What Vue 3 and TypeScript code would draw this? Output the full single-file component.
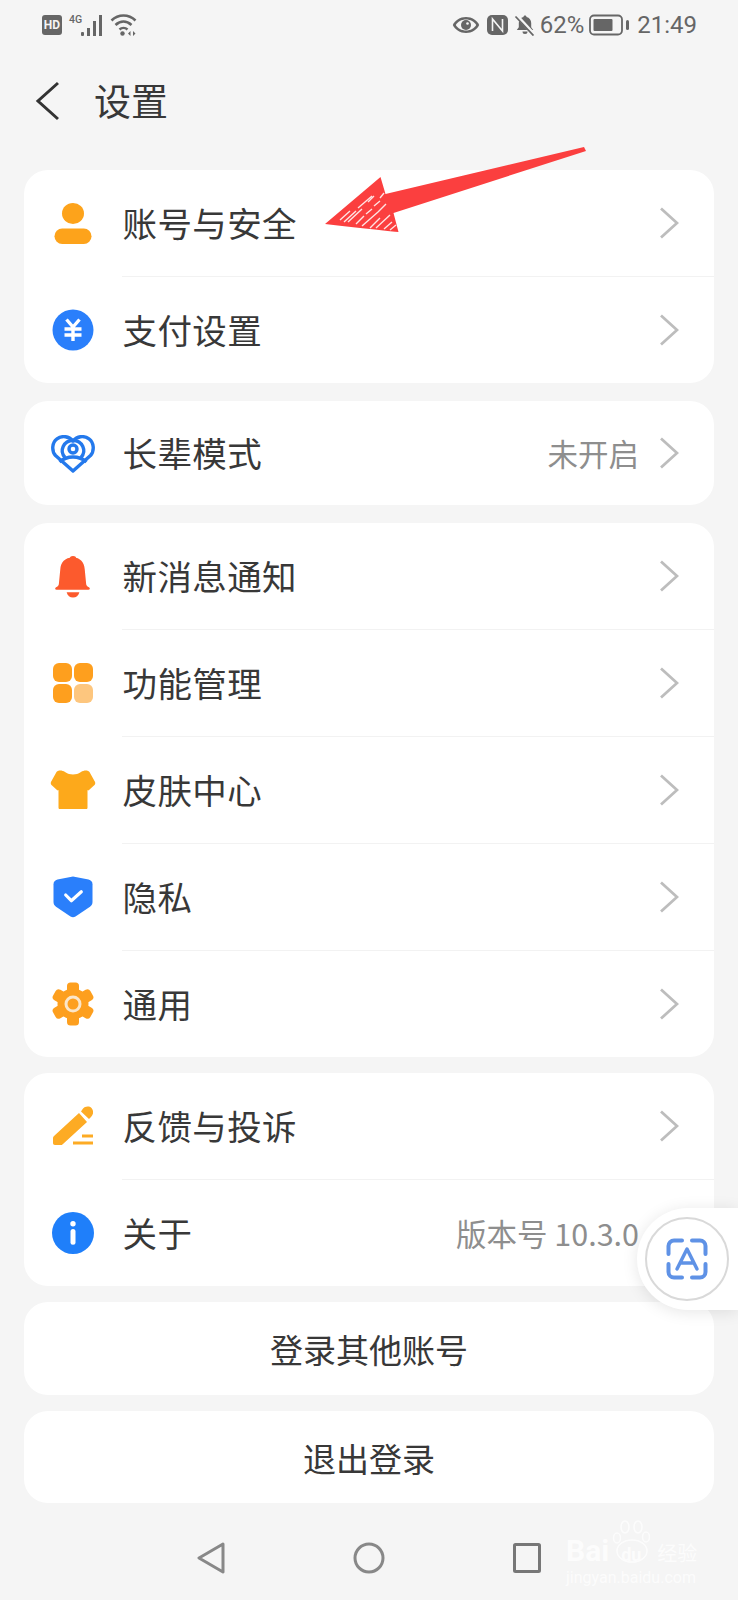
<script setup lang="ts">
interface Row {
  label: string
  icon: string
  value?: string
  chevron?: boolean
}

const groups: { tall: boolean; rows: Row[] }[] = [
  {
    tall: true,
    rows: [
      { label: '账号与安全', icon: 'user', chevron: true },
      { label: '支付设置', icon: 'pay', chevron: true },
    ],
  },
  {
    tall: false,
    rows: [{ label: '长辈模式', icon: 'heart', value: '未开启', chevron: true }],
  },
  {
    tall: true,
    rows: [
      { label: '新消息通知', icon: 'bell', chevron: true },
      { label: '功能管理', icon: 'grid', chevron: true },
      { label: '皮肤中心', icon: 'shirt', chevron: true },
      { label: '隐私', icon: 'shield', chevron: true },
      { label: '通用', icon: 'gear', chevron: true },
    ],
  },
  {
    tall: true,
    rows: [
      { label: '反馈与投诉', icon: 'pen', chevron: true },
      { label: '关于', icon: 'info', value: '版本号 10.3.0' },
    ],
  },
]

const gearTeeth = [0, 60, 120, 180, 240, 300]
</script>

<template>
  <div class="page">
    <div class="status">
      <div class="status-left">
        <span class="hd">HD</span>
        <span class="net">4G</span>
        <svg class="signal" width="24" height="22" viewBox="0 0 24 22">
          <rect x="0" y="17" width="3" height="4" rx="1" />
          <rect x="6" y="13" width="3" height="8" />
          <rect x="12" y="6" width="3" height="15" />
          <rect x="18" y="0" width="3" height="21" />
        </svg>
        <svg class="wifi" width="28" height="24" viewBox="0 0 28 24" fill="none" stroke="#666" stroke-width="2.6">
          <path d="M1.500 7.500C8.500 .8 18.500 .8 25.500 7.500" />
          <path d="M5.500 12C10.500 7.500 16.500 7.500 21.500 12" />
          <path d="M9.500 16.500C11.800 14.500 15.200 14.500 17.500 16.500" />
          <circle cx="12.500" cy="20.500" r="2.200" fill="#666" stroke="none" />
          <path d="M20.500 18l-2.500 2.500 2.500 2.500zM23 18l2.500 2.500-2.500 2.500z" fill="#666" stroke="none" />
        </svg>
      </div>
      <div class="status-right">
        <svg width="28" height="18" viewBox="0 0 28 18">
          <path d="M14 1C8 1 3 4.500 .8 9 3 13.500 8 17 14 17s11-3.500 13.200-8C25 4.500 20 1 14 1z" fill="#666" />
          <path d="M14 3.500C9.500 3.500 5.800 5.700 3.800 9c2 3.300 5.700 5.500 10.200 5.500S22.200 12.300 24.200 9C22.200 5.700 18.500 3.500 14 3.500z" fill="#f5f5f5" />
          <circle cx="14" cy="9" r="5" fill="#666" />
          <circle cx="15.500" cy="7.500" r="1.300" fill="#f5f5f5" />
        </svg>
        <svg class="nfc" width="21" height="20" viewBox="0 0 21 20">
          <rect width="21" height="20" rx="5" fill="#666" />
          <path d="M5.500 16V4l10 12V4" fill="none" stroke="#f5f5f5" stroke-width="1.600" />
        </svg>
        <svg class="mute" width="22" height="22" viewBox="0 0 22 22">
          <path d="M11 1.500c.9 0 1.500.6 1.500 1.400 3 .7 4.700 3.100 4.700 6.100v4.300l2 2.700H2.800l2-2.700V9c0-3 1.700-5.400 4.700-6.100 0-.8.6-1.400 1.500-1.400z" fill="#666" />
          <path d="M8.500 17.500h5a2.500 2.500 0 0 1-5 0z" fill="#666" />
          <path d="M2.500 1.500l17.500 19" stroke="#f5f5f5" stroke-width="3.500" />
          <path d="M1.500 2.500l18 19" stroke="#666" stroke-width="1.800" />
        </svg>
        <span class="pct">62%</span>
        <svg class="battery" width="42" height="22" viewBox="0 0 42 22">
          <rect x="1" y="1.500" width="32" height="19" rx="4" fill="none" stroke="#666" stroke-width="1.800" />
          <rect x="4.500" y="5" width="19" height="12" rx="1" fill="#666" />
          <rect x="37" y="6" width="3" height="10" rx="1.500" fill="#666" />
        </svg>
        <span class="time">21:49</span>
      </div>
    </div>

    <header class="head">
      <svg class="back" width="26" height="40" viewBox="0 0 26 40" fill="none" stroke="#333" stroke-width="3">
        <path d="M24 2 4 20l20 18" />
      </svg>
      <h1>设置</h1>
    </header>

    <section v-for="(group, g) in groups" :key="g" class="card">
      <div v-for="row in group.rows" :key="row.label" class="row" :class="{ short: !group.tall }">
        <div class="ico">
          <svg v-if="row.icon === 'user'" width="38" height="41" viewBox="0 0 38 41">
            <ellipse cx="19" cy="10.500" rx="11" ry="10.500" fill="#fda31b" />
            <rect x="0.500" y="25.500" width="37" height="15.500" rx="7.700" fill="#fda31b" />
          </svg>
          <svg v-else-if="row.icon === 'pay'" width="42" height="42" viewBox="0 0 42 42">
            <circle cx="21" cy="21" r="20.500" fill="#2a7ffb" />
            <path d="M14.500 10.500 21 18l6.500-7.500M12.500 20h17M12.500 26h17M21 18v14" fill="none" stroke="#fff" stroke-width="3.400" />
          </svg>
          <svg v-else-if="row.icon === 'heart'" class="heart" width="44" height="38" viewBox="0 0 44 38" fill="none" stroke="#2479ec" stroke-width="3.400">
            <path d="M22 36 4.500 20.500C.5 16 .8 7.500 6 3.800 11.500 0 18 1.500 22 6c4-4.500 10.500-6 16-2.200 5.200 3.700 5.500 12.200 1.500 16.700z" stroke-linejoin="round" />
            <path d="M14 22.500C8 16 12.500 5.500 22 5.500S36 16 30 22.500" />
            <circle cx="22" cy="14" r="4" />
            <path d="M8.500 27C12.500 23.500 17 22 22 22s9.500 1.500 13.500 5" />
          </svg>
          <svg v-else-if="row.icon === 'bell'" width="38" height="43" viewBox="0 0 38 44">
            <circle cx="19" cy="4.500" r="3.500" fill="#fc5a2d" />
            <path d="M19 2.500c7.500 0 11.500 5 12 12l1.500 15.500c.3 1.500 1.200 2.500 2.800 3 1.500.8 1.200 2.500-.5 2.500H2.200c-1.700 0-2-1.700-.5-2.500 1.600-.5 2.500-1.500 2.800-3L6 14.500c.5-7 4.500-12 13-12z" fill="#fc5a2d" />
            <path d="M12.500 38h13c-.8 3.500-3.300 5.500-6.500 5.500s-5.700-2-6.500-5.500z" fill="#fc5a2d" />
          </svg>
          <svg v-else-if="row.icon === 'grid'" width="40" height="40" viewBox="0 0 40 40">
            <rect x="0" y="0" width="19" height="19" rx="6" fill="#fe9f1e" />
            <rect x="21" y="0" width="19" height="19" rx="6" fill="#fe9f1e" />
            <rect x="0" y="21" width="19" height="19" rx="6" fill="#fe9f1e" />
            <rect x="21" y="21" width="19" height="19" rx="6" fill="#fdc67e" />
          </svg>
          <svg v-else-if="row.icon === 'shirt'" width="46" height="40" viewBox="0 0 46 40">
            <path d="M10 .5c2 0 3.500.5 5 1.500 3 1.800 5 2.500 8 2.500s5-.7 8-2.500c1.500-1 3-1.500 5-1.500 1.500 0 2.500.5 3.500 1.500l5 9c1 1.500 1 3 0 4L39 20c-.5.500-1 .5-1.500 0v17.500c0 1-.5 1.500-1.500 1.500H10c-1 0-1.500-.5-1.500-1.500V20c-.5.500-1 .5-1.500 0l-5.500-5c-1-1-1-2.500 0-4l5-9c1-1 2-1.500 3.500-1.500z" fill="#fda91b" />
          </svg>
          <svg v-else-if="row.icon === 'shield'" width="40" height="42" viewBox="0 0 40 42">
            <path d="M20 .5 35.500 3.500c2.500.6 4 2.300 4 4.700V26c0 2-1 3.500-2.500 4.700L22.500 40.500c-1.600 1-3.400 1-5 0L3 30.700C1.500 29.500.5 28 .5 26V8.200c0-2.400 1.500-4.100 4-4.700z" fill="#2a7ffb" />
            <path d="M12.700 19l5.600 5.700 10-9" fill="none" stroke="#fff" stroke-width="3.200" stroke-linecap="round" stroke-linejoin="round" />
          </svg>
          <svg v-else-if="row.icon === 'gear'" width="42" height="44" viewBox="0 0 42 44">
            <circle cx="21" cy="22" r="15.500" fill="#fd9f1e" />
            <rect v-for="a in gearTeeth" :key="a" x="15" y="0.500" width="12" height="12" rx="3.500" fill="#fd9f1e" :transform="`rotate(${a} 21 22)`" />
            <circle cx="21" cy="22" r="8.500" fill="#fbe6c8" />
            <circle cx="21" cy="22" r="5.500" fill="#fd9f1e" />
          </svg>
          <svg v-else-if="row.icon === 'pen'" width="40" height="40" viewBox="0 0 40 40">
            <path d="M26 7l8 9-24 22c-.5.500-1 1-2 1H2c-1.300 0-2-.7-2-2v-5c0-.8.300-1.300 1-2z" fill="#fdab24" />
            <path d="M29 4c2-3.800 7-4.500 9.500-2 2.500 3 2 6.500-.5 9l-2 2-8-7.500z" fill="#fdab24" />
            <rect x="29" y="28.500" width="11" height="3" fill="#fdab24" />
            <rect x="20" y="35.500" width="20" height="3" fill="#fdab24" />
          </svg>
          <svg v-else-if="row.icon === 'info'" width="42" height="42" viewBox="0 0 42 42">
            <circle cx="21" cy="21" r="21" fill="#1f7ffa" />
            <circle cx="21" cy="11.700" r="2.700" fill="#fff" />
            <rect x="18.500" y="17" width="5" height="15.700" rx="2.500" fill="#fff" />
          </svg>
        </div>
        <div class="body">
          <span class="label">{{ row.label }}</span>
          <span v-if="row.value" class="value">{{ row.value }}</span>
          <svg class="chev" :class="{ blank: !row.chevron }" width="20" height="32" viewBox="0 0 20 32" fill="none" stroke="#bdbdbd" stroke-width="2.800">
            <path d="M2 1.500 18 16 2 30.500" />
          </svg>
        </div>
      </div>
    </section>

    <button class="action">登录其他账号</button>
    <button class="action">退出登录</button>

    <nav class="nav">
      <svg width="28" height="32" viewBox="0 0 28 32" fill="none" stroke="#888" stroke-width="3" stroke-linejoin="round">
        <path d="M26 2 2 16l24 14z" />
      </svg>
      <svg width="32" height="32" viewBox="0 0 32 32" fill="none" stroke="#888" stroke-width="3">
        <circle cx="16" cy="16" r="14" />
      </svg>
      <svg width="28" height="30" viewBox="0 0 28 30" fill="none" stroke="#777" stroke-width="3" stroke-linejoin="round">
        <rect x="1.500" y="1.500" width="25" height="27" rx="1" />
      </svg>
    </nav>

    <!-- hand-drawn annotation arrow -->
    <svg class="arrow" width="270" height="90" viewBox="0 0 270 90">
      <path d="M266 1l2 4L75.500 67l5 19Q70 85 7 78l55.500-47 5 17z" fill="#fb3f3f" />
      <path d="M22 74l10-9M26 76l12-11M30 76l14-13M38 78l8-8M44 80l16-14M52 82l10-10M58 82l14-13M66 83l8-7M40 62l14-12M50 56l6-6M60 66l8-8M48 68l6-5M62 52l4-5M72 84l6-5M56 60l6-5" stroke="#fff" stroke-width="1.400" fill="none" opacity=".85" />
    </svg>

    <!-- floating translate button -->
    <div class="float">
      <div class="ring">
        <svg width="42" height="42" viewBox="0 0 42 42" fill="none" stroke="#5f92e6" stroke-width="4" stroke-linecap="round">
          <path d="M2.500 16V8A5.500 5.500 0 0 1 8 2.500h8" />
          <path d="M26 2.500h8A5.500 5.500 0 0 1 39.500 8v8" />
          <path d="M2.500 26v8A5.500 5.500 0 0 0 8 39.500h8" />
          <path d="M26 39.500h8a5.500 5.500 0 0 0 5.500-5.500v-8" />
          <path d="M11 31 21 11l10 20M14.500 25h13" stroke-width="3.500" stroke-linejoin="round" />
        </svg>
      </div>
    </div>

    <!-- image host watermark -->
    <div class="mark">
      <svg class="paw" width="40" height="44" viewBox="0 0 40 44" fill="none" stroke="#fff" stroke-width="1.500">
        <ellipse cx="5" cy="18" rx="3.500" ry="5" />
        <ellipse cx="13" cy="7" rx="4" ry="6" />
        <ellipse cx="26" cy="7" rx="4" ry="6" />
        <ellipse cx="34" cy="17" rx="3.500" ry="5" />
        <ellipse cx="20" cy="31" rx="15" ry="11" />
      </svg>
      <div class="mark-line"><span>Bai</span><span class="du">du</span><span class="jy">经验</span></div>
      <div class="mark-url">jingyan.baidu.com</div>
    </div>
  </div>
</template>

<style>
html,
body {
  margin: 0;
  background: #f5f5f5;
}
</style>

<style scoped>
.page {
  position: relative;
  box-sizing: border-box;
  width: 738px;
  height: 1600px;
  overflow: hidden;
  padding: 0 24px;
  background: #f5f5f5;
  font-family: "Noto Sans CJK SC", "Noto Sans", sans-serif;
  color: #383838;
}

.status {
  display: flex;
  justify-content: space-between;
  align-items: center;
  height: 50px;
  margin: 0 17px 0 18px;
  color: #666;
}

.status-left,
.status-right {
  display: flex;
  align-items: center;
}

.hd {
  display: flex;
  justify-content: center;
  align-items: center;
  width: 20px;
  height: 20px;
  border-radius: 3px;
  background: #666;
  color: #f5f5f5;
  font: 700 12px "Roboto", sans-serif;
}

.net {
  align-self: flex-start;
  width: 12px;
  margin: 2px 0 0 7px;
  font: 500 10.5px/10px "Roboto", sans-serif;
}

.signal {
  margin-top: 2px;
  fill: #666;
}

.wifi {
  margin-left: 5px;
}

.status-right {
  font: 400 24px "Roboto", sans-serif;
}

.nfc {
  margin-left: 7px;
}

.mute {
  margin-left: 6px;
}

.pct {
  margin-left: 4px;
}

.battery {
  margin-left: 5px;
}

.time {
  margin-left: 6px;
}

.head {
  display: flex;
  align-items: center;
  box-sizing: border-box;
  height: 120px;
  padding: 0 0 18px 10px;
}

.head h1 {
  margin: 0 0 2px 34px;
  font-size: 37px;
  font-weight: 400;
  line-height: 1;
}

.back {
  flex: none;
}

.card {
  margin-bottom: 16px;
  border-radius: 24px;
  background: #fff;
  overflow: hidden;
}

.card:nth-of-type(1),
.card:nth-of-type(2) {
  margin-bottom: 18px;
}

.row {
  display: flex;
  align-items: center;
  height: 107px;
}

.row:first-child {
  height: 106px;
}

.row.short {
  height: 104px;
}

.ico {
  display: flex;
  flex: none;
  justify-content: center;
  align-items: center;
  width: 98px;
}

.heart {
  margin-top: 1px;
}

.body {
  display: flex;
  flex: 1;
  align-items: center;
  align-self: stretch;
  padding-right: 35px;
  border-top: 1px solid #f2f2f2;
}

.row:first-child .body {
  border-top: 0;
}

.label {
  flex: 1;
  padding: 0 0 2px 0.5px;
  font-size: 34.5px;
  letter-spacing: 0.4px;
  line-height: 1;
}

.value {
  color: #8e8e8e;
  font-size: 30.5px;
  line-height: 1;
}

.chev {
  margin-left: 20px;
}

.chev.blank {
  visibility: hidden;
}

.action {
  display: block;
  width: 100%;
  height: 92.5px;
  margin: 0 0 16px;
  padding: 2px 0 0;
  border: 0;
  border-radius: 24px;
  background: #fff;
  color: #383838;
  font-family: inherit;
  font-size: 33px;
}

.nav {
  display: flex;
  justify-content: space-between;
  align-items: center;
  width: 344px;
  margin: 39px 0 0 173px;
}

.arrow {
  position: absolute;
  left: 318px;
  top: 146px;
}

.float {
  position: absolute;
  right: 0;
  top: 1208px;
  display: flex;
  align-items: center;
  width: 101px;
  height: 102px;
  padding-left: 8px;
  box-sizing: border-box;
  border-radius: 51px 0 0 51px;
  background: #fff;
  box-shadow: 0 2px 16px rgba(0, 0, 0, 0.1);
}

.ring {
  display: flex;
  flex: none;
  justify-content: center;
  align-items: center;
  width: 84px;
  height: 84px;
  box-sizing: border-box;
  border: 2px solid #d9d9d9;
  border-radius: 50%;
}

.mark {
  position: absolute;
  left: 566px;
  top: 1520px;
  width: 140px;
  height: 70px;
  color: #fff;
  opacity: 0.75;
}

.paw {
  position: absolute;
  left: 46px;
  top: 0;
}

.mark-line {
  position: absolute;
  left: 0;
  top: 16px;
  display: flex;
  align-items: baseline;
  font: 700 30px/30px "Roboto", sans-serif;
  white-space: nowrap;
}

.du {
  margin-left: 12px;
  font-size: 18px;
}

.jy {
  margin-left: 16px;
  font: 400 20px/30px "Noto Sans CJK SC", sans-serif;
}

.mark-url {
  position: absolute;
  left: 0;
  top: 48px;
  font: 400 16px "Roboto", sans-serif;
  white-space: nowrap;
}
</style>
